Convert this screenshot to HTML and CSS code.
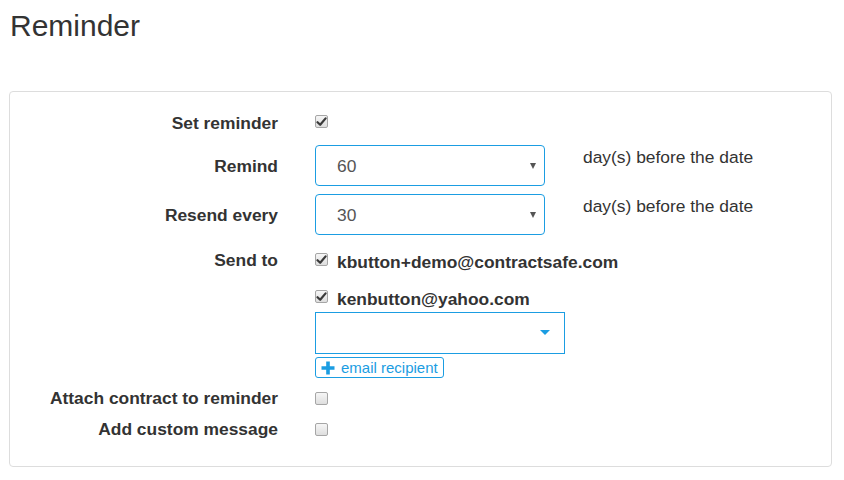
FILE: index.html
```html
<!DOCTYPE html>
<html>
<head>
<meta charset="utf-8">
<link rel="stylesheet" href="styles.css">
</head>
<body>
<h1 class="title">Reminder</h1>
<div class="panel">
  <div class="row row-set">
    <div class="lbl">Set reminder</div>
    <div class="ctl">
      <span class="cb cb-top"><svg width="11" height="11" viewBox="0 0 11 11"><path d="M1.5 6.2 L4.2 8.8 L9.6 2.4" fill="none" stroke="#3a3a3a" stroke-width="2.2" stroke-linecap="round" stroke-linejoin="round"/></svg></span>
    </div>
  </div>
  <div class="row row-remind">
    <div class="lbl lbl-pad">Remind</div>
    <div class="ctl">
      <div class="select"><span>60</span><span class="caret"></span></div>
      <div class="suffix">day(s) before the date</div>
    </div>
  </div>
  <div class="row row-resend">
    <div class="lbl lbl-pad">Resend every</div>
    <div class="ctl">
      <div class="select"><span>30</span><span class="caret"></span></div>
      <div class="suffix">day(s) before the date</div>
    </div>
  </div>
  <div class="row row-send">
    <div class="lbl">Send to</div>
    <div class="ctl ctl-col">
      <div class="email">
        <span class="cb"><svg width="11" height="11" viewBox="0 0 11 11"><path d="M1.5 6.2 L4.2 8.8 L9.6 2.4" fill="none" stroke="#3a3a3a" stroke-width="2.2" stroke-linecap="round" stroke-linejoin="round"/></svg></span>
        <span class="email-text">kbutton+demo@contractsafe.com</span>
      </div>
      <div class="email email-2">
        <span class="cb"><svg width="11" height="11" viewBox="0 0 11 11"><path d="M1.5 6.2 L4.2 8.8 L9.6 2.4" fill="none" stroke="#3a3a3a" stroke-width="2.2" stroke-linecap="round" stroke-linejoin="round"/></svg></span>
        <span class="email-text">kenbutton@yahoo.com</span>
      </div>
      <div class="picker"><span class="picker-caret"></span></div>
      <div class="btn"><svg width="14" height="14" viewBox="0 0 14 14"><path d="M5.2 0.5h3.6v4.7h4.7v3.6H8.8v4.7H5.2V8.8H0.5V5.2h4.7z" fill="#1b9de2"/></svg><span>email recipient</span></div>
    </div>
  </div>
  <div class="row row-attach">
    <div class="lbl">Attach contract to reminder</div>
    <div class="ctl"><span class="cb cb-mid"></span></div>
  </div>
  <div class="row row-custom">
    <div class="lbl">Add custom message</div>
    <div class="ctl"><span class="cb cb-mid"></span></div>
  </div>
</div>
</body>
</html>
```

FILE: styles.css
```css
html, body {
  margin: 0;
  padding: 0;
  background: #fff;
}
body {
  font-family: "Liberation Sans", Arial, sans-serif;
  font-size: 17.4px;
  line-height: 20px;
  color: #333;
}
.title {
  margin: 9px 0 0 10px;
  font-size: 30px;
  line-height: 33px;
  font-weight: normal;
  color: #333;
}
.panel {
  box-sizing: border-box;
  margin: 49px 0 0 9px;
  width: 823px;
  border: 1px solid #ddd;
  border-radius: 4px;
  padding: 21px 0 27px 0;
}
.row {
  display: grid;
  grid-template-columns: 268px 1fr;
  column-gap: 37px;
  align-items: start;
}
.lbl {
  text-align: right;
  font-weight: bold;
  line-height: 20px;
  white-space: nowrap;
}
.lbl-pad { padding-top: 11px; }
.ctl {
  display: flex;
  align-items: flex-start;
}
.ctl-col {
  flex-direction: column;
  padding-top: 2px;
}
.row-remind { margin-top: 12px; }
.row-resend { margin-top: 8px; }
.row-send { margin-top: 15px; }
.row-attach { margin-top: 10px; }
.row-custom { margin-top: 11px; }

.cb {
  box-sizing: border-box;
  width: 13px;
  height: 13px;
  border: 1px solid #a6a6a6;
  border-radius: 2px;
  background: linear-gradient(#f6f6f6, #dedede);
  display: flex;
  align-items: center;
  justify-content: center;
  flex: none;
}
.cb-top { margin-top: 2px; }
.cb-mid { margin-top: 4px; }

.select {
  box-sizing: border-box;
  width: 230px;
  height: 41px;
  border: 1px solid #1b9de2;
  border-radius: 4px;
  padding: 0 8px 0 21px;
  display: flex;
  align-items: center;
  justify-content: space-between;
  color: #555;
}
.caret {
  width: 0;
  height: 0;
  border-left: 3px solid transparent;
  border-right: 3px solid transparent;
  border-top: 6px solid #555;
}
.suffix {
  margin-left: 38px;
  padding-top: 2px;
  color: #333;
  white-space: nowrap;
}
.email {
  display: flex;
  align-items: flex-start;
  height: 20px;
}
.email .cb { margin-top: 1px; }
.email-2 { margin-top: 17px; }
.email-text {
  margin-left: 9px;
  font-weight: bold;
  white-space: nowrap;
}
.picker {
  box-sizing: border-box;
  margin-top: 3px;
  width: 250px;
  height: 42px;
  border: 1px solid #1b9de2;
  display: flex;
  align-items: center;
  justify-content: flex-end;
  padding-right: 14px;
}
.picker-caret {
  width: 0;
  height: 0;
  border-left: 5px solid transparent;
  border-right: 5px solid transparent;
  border-top: 5px solid #1b9de2;
  margin-top: -2px;
}
.btn {
  box-sizing: border-box;
  margin-top: 3px;
  height: 21px;
  display: inline-flex;
  align-self: flex-start;
  align-items: center;
  border: 1px solid #1b9de2;
  border-radius: 3px;
  padding: 0 5px 0 5px;
  color: #1b9de2;
  font-size: 15px;
  line-height: 17px;
  white-space: nowrap;
}
.btn svg { flex: none; }
.btn span { margin-left: 6px; }
```
